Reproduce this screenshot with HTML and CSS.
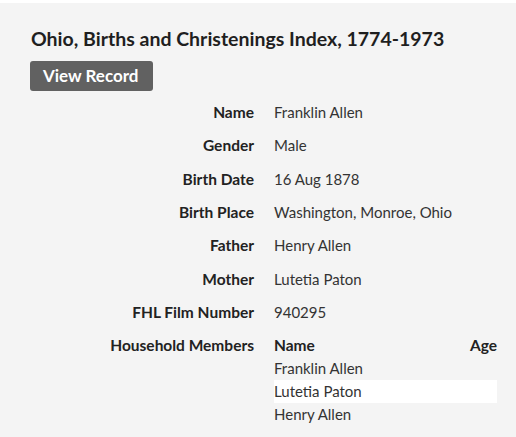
FILE: index.html
```html
<!DOCTYPE html>
<html>
<head>
<meta charset="utf-8">
<link rel="stylesheet" href="styles.css">
</head>
<body>
<div class="page">
  <h1 class="title">Ohio, Births and Christenings Index, 1774-1973</h1>
  <a class="btn">View Record</a>
  <div class="record">
    <div class="label">Name</div><div class="value">Franklin Allen</div>
    <div class="label">Gender</div><div class="value">Male</div>
    <div class="label">Birth Date</div><div class="value">16 Aug 1878</div>
    <div class="label">Birth Place</div><div class="value">Washington, Monroe, Ohio</div>
    <div class="label">Father</div><div class="value">Henry Allen</div>
    <div class="label">Mother</div><div class="value">Lutetia Paton</div>
    <div class="label">FHL Film Number</div><div class="value">940295</div>
    <div class="label">Household Members</div>
    <div class="value">
      <div class="members">
        <div class="mrow head"><span>Name</span><span>Age</span></div>
        <div class="mrow"><span>Franklin Allen</span><span></span></div>
        <div class="mrow alt"><span>Lutetia Paton</span><span></span></div>
        <div class="mrow"><span>Henry Allen</span><span></span></div>
      </div>
    </div>
  </div>
</div>
</body>
</html>
```
FILE: styles.css
```css
html, body { margin: 0; padding: 0; }
body {
  background: #ffffff;
  font-family: "Lato", "Noto Sans", sans-serif;
  color: #333333;
}
.page {
  margin-top: 3px;
  background: #f4f4f4;
  height: 434px;
  box-sizing: border-box;
  padding: 24px 19px 0 30px;
}
.title {
  margin: 0 0 0 1px;
  font-size: 19.5px;
  line-height: 24px;
  font-weight: 700;
  color: #1f1f1f;
}
.btn {
  display: inline-block;
  margin-top: 10px;
  background: #616161;
  color: #ffffff;
  font-weight: 700;
  font-size: 17px;
  line-height: 30px;
  padding: 0 14px 0 13px;
  border-radius: 3px;
}
.record {
  display: grid;
  grid-template-columns: 224px 223px;
  column-gap: 20px;
  row-gap: 10.33px;
  margin-top: 10px;
  font-size: 15px;
  line-height: 23px;
}
.label {
  text-align: right;
  font-weight: 700;
  font-size: 15.5px;
  color: #222222;
}
.value { color: #333333; }
.mrow {
  display: flex;
  justify-content: space-between;
}
.mrow.head { font-weight: 700; font-size: 15.5px; color: #222222; }
.mrow.alt { background: #ffffff; }
```
